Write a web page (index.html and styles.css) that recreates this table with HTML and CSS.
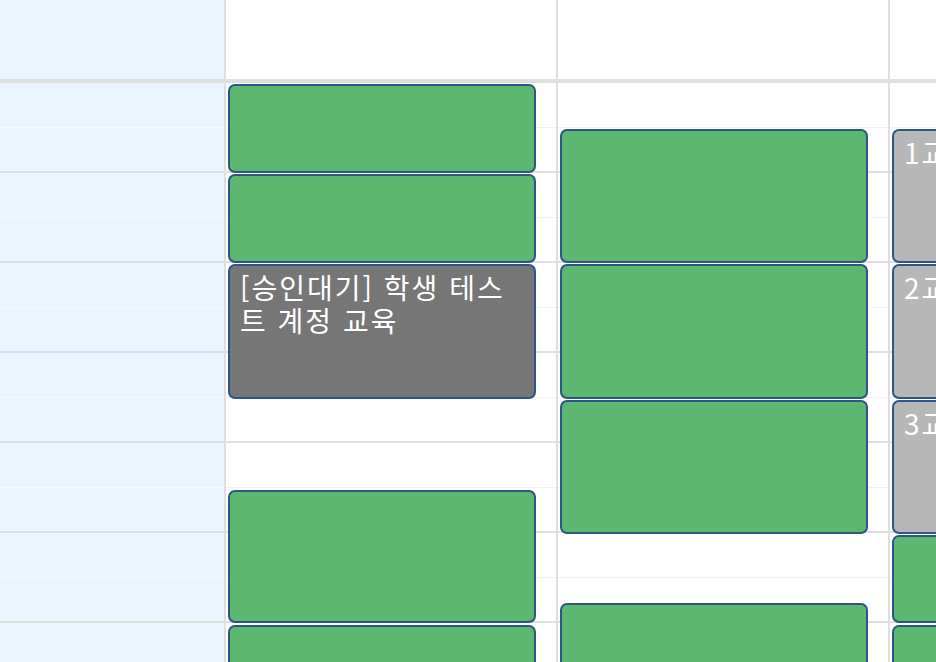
FILE: index.html
```html
<!DOCTYPE html>
<html lang="ko">
<head>
<meta charset="utf-8">
<link rel="stylesheet" href="styles.css">
</head>
<body>
<div class="calendar">
  <div class="header">
    <div class="hcell axis"></div>
    <div class="hcell day"></div>
    <div class="hcell day"></div>
    <div class="hcell day"></div>
  </div>
  <div class="body">
    <div class="col axis">
      <div class="slot"></div><div class="slot hour"></div>
      <div class="slot"></div><div class="slot hour"></div>
      <div class="slot"></div><div class="slot hour"></div>
      <div class="slot"></div><div class="slot hour"></div>
      <div class="slot"></div><div class="slot hour"></div>
      <div class="slot"></div><div class="slot hour"></div>
      <div class="slot"></div><div class="slot hour"></div>
    </div>
    <div class="col day">
      <div class="slot"></div><div class="slot hour"></div>
      <div class="slot"></div><div class="slot hour"></div>
      <div class="slot"></div><div class="slot hour"></div>
      <div class="slot"></div><div class="slot hour"></div>
      <div class="slot"></div><div class="slot hour"></div>
      <div class="slot"></div><div class="slot hour"></div>
      <div class="slot"></div><div class="slot hour"></div>
      <div class="event green" style="top:1px;height:89px"></div>
      <div class="event green" style="top:91px;height:89px"></div>
      <div class="event dark" style="top:181px;height:135px">[승인대기] 학생 테스트 계정 교육</div>
      <div class="event green" style="top:407px;height:133px"></div>
      <div class="event green" style="top:542px;height:133px"></div>
    </div>
    <div class="col day">
      <div class="slot"></div><div class="slot hour"></div>
      <div class="slot"></div><div class="slot hour"></div>
      <div class="slot"></div><div class="slot hour"></div>
      <div class="slot"></div><div class="slot hour"></div>
      <div class="slot"></div><div class="slot hour"></div>
      <div class="slot"></div><div class="slot hour"></div>
      <div class="slot"></div><div class="slot hour"></div>
      <div class="event green" style="top:46px;height:134px"></div>
      <div class="event green" style="top:181px;height:135px"></div>
      <div class="event green" style="top:317px;height:134px"></div>
      <div class="event green" style="top:520px;height:134px"></div>
    </div>
    <div class="col day">
      <div class="slot"></div><div class="slot hour"></div>
      <div class="slot"></div><div class="slot hour"></div>
      <div class="slot"></div><div class="slot hour"></div>
      <div class="slot"></div><div class="slot hour"></div>
      <div class="slot"></div><div class="slot hour"></div>
      <div class="slot"></div><div class="slot hour"></div>
      <div class="slot"></div><div class="slot hour"></div>
      <div class="event light" style="top:46px;height:134px">1교시 수업</div>
      <div class="event light" style="top:181px;height:135px">2교시 수업</div>
      <div class="event light" style="top:317px;height:134px">3교시 수업</div>
      <div class="event green" style="top:452px;height:88px"></div>
      <div class="event green" style="top:542px;height:133px"></div>
    </div>
  </div>
</div>
</body>
</html>
```
FILE: styles.css
```css
html, body {
  margin: 0;
  padding: 0;
  background: #ffffff;
  overflow: hidden;
}

body {
  width: 936px;
  height: 662px;
  font-family: "Noto Sans CJK KR", "Noto Sans", sans-serif;
}

.calendar {
  width: 1300px;
}

.header {
  display: flex;
  height: 79px;
  border-bottom: 4px solid #dedede;
}

.hcell {
  flex: none;
  height: 100%;
  box-sizing: border-box;
  border-right: 2px solid #dedede;
  background: #ffffff;
}

.axis {
  width: 226px;
  background: #ebf5ff;
}

.day {
  width: 332px;
}

.body {
  display: flex;
}

.col {
  flex: none;
  position: relative;
  box-sizing: border-box;
  border-right: 2px solid #dedede;
}

.col.day {
  background: #ffffff;
}

.slot {
  height: 45px;
  box-sizing: border-box;
  border-bottom: 1px solid #f1f1f1;
}

.axis .slot {
  border-bottom-color: #f6faff;
}

.slot.hour,
.axis .slot.hour {
  border-bottom: 2px solid #dedede;
}

.event {
  position: absolute;
  left: 2px;
  width: 308px;
  box-sizing: border-box;
  border: 2px solid #2f5486;
  border-radius: 7px;
  padding: 5px 10px 0 10px;
  color: #ffffff;
  font-size: 28px;
  line-height: 33px;
  letter-spacing: 2px;
  overflow: hidden;
}

.green {
  background: #5cb870;
}

.dark {
  background: #767676;
}

.light {
  background: #b7b7b7;
}
```
